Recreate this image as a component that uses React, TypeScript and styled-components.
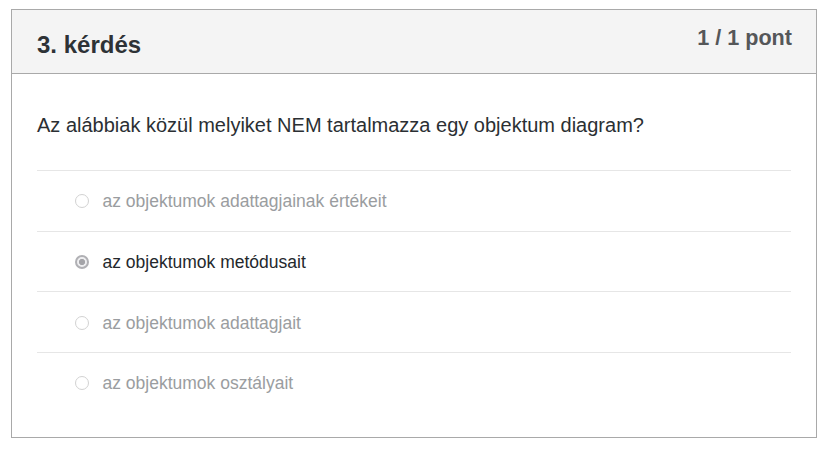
import React from "react";
import styled, { createGlobalStyle } from "styled-components";

const Global = createGlobalStyle`
  html, body { margin: 0; padding: 0; background: #ffffff; }
  body { font-family: "Liberation Sans", Arial, sans-serif; }
`;

const Card = styled.section`
  box-sizing: border-box;
  width: 806px;
  height: 429px;
  margin: 9px 0 0 11px;
  border: 1px solid #a9a9a9;
  background: #ffffff;
  display: flex;
  flex-direction: column;
`;

const Header = styled.header`
  box-sizing: border-box;
  height: 64px;
  background: #f4f4f4;
  border-bottom: 1px solid #a9a9a9;
  display: flex;
  justify-content: space-between;
  align-items: flex-start;
  padding: 0 24px 0 25px;
`;

const Title = styled.h3`
  margin: 21px 0 0;
  font-size: 24px;
  line-height: 28px;
  font-weight: 700;
  color: #2e3236;
`;

const Points = styled.div`
  margin-top: 16px;
  font-size: 21.6px;
  line-height: 24px;
  font-weight: 700;
  color: #555759;
`;

const Body = styled.div`
  padding: 37px 25px 0;
`;

const Question = styled.p`
  margin: 0 0 31px;
  font-size: 20px;
  line-height: 28px;
  color: #2b2f33;
`;

const OptionList = styled.ul`
  list-style: none;
  margin: 0;
  padding: 0;
`;

const Option = styled.li`
  box-sizing: border-box;
  height: 60.67px;
  display: flex;
  align-items: center;
  gap: 14px;
  padding-left: 37.5px;
  padding-top: 1px;
  border-top: 1px solid #e6e6e6;
`;

const Radio = styled.span<{ $checked?: boolean }>`
  box-sizing: border-box;
  width: 14px;
  height: 14px;
  border-radius: 50%;
  flex: none;
  border: ${(p) => (p.$checked ? "2.5px solid #b0b0b4" : "1.5px solid #d2d2d2")};
  background: ${(p) =>
    p.$checked
      ? "radial-gradient(circle, #a4a4a8 0 2.8px, #eeeef0 3.3px 100%)"
      : "#ffffff"};
`;

const Label = styled.span<{ $checked?: boolean }>`
  font-size: 17.5px;
  line-height: 22px;
  color: ${(p) => (p.$checked ? "#24282c" : "#9a9da0")};
`;

const options = [
  { text: "az objektumok adattagjainak értékeit", checked: false },
  { text: "az objektumok metódusait", checked: true },
  { text: "az objektumok adattagjait", checked: false },
  { text: "az objektumok osztályait", checked: false },
];

export default function App() {
  return (
    <>
      <Global />
      <Card>
        <Header>
          <Title>3. kérdés</Title>
          <Points>1 / 1 pont</Points>
        </Header>
        <Body>
          <Question>Az alábbiak közül melyiket NEM tartalmazza egy objektum diagram?</Question>
          <OptionList>
            {options.map((o) => (
              <Option key={o.text}>
                <Radio $checked={o.checked} />
                <Label $checked={o.checked}>{o.text}</Label>
              </Option>
            ))}
          </OptionList>
        </Body>
      </Card>
    </>
  );
}
